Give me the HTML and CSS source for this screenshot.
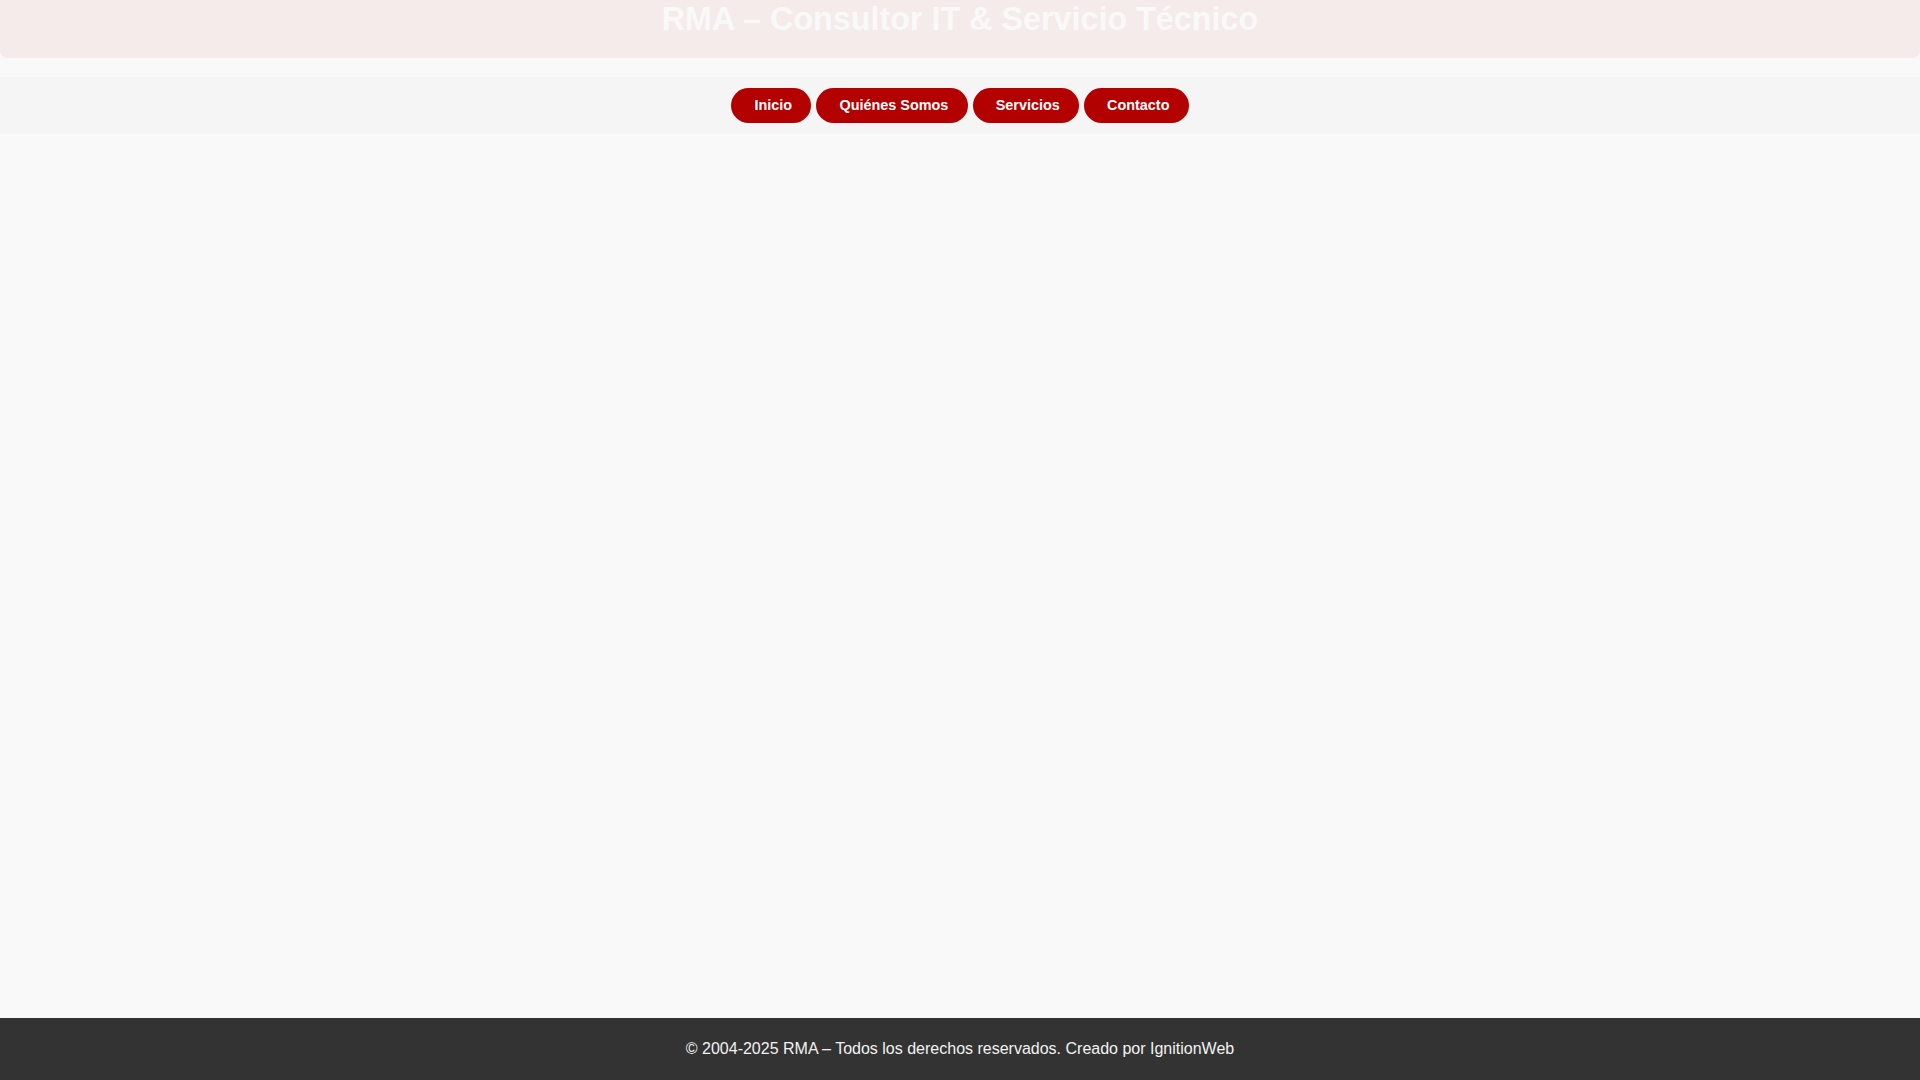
FILE: index.html
```html
<!DOCTYPE html>
<html lang="es">
<head>
<meta charset="utf-8">
<title>RMA – Consultor IT &amp; Servicio Técnico</title>
<link rel="stylesheet" href="styles.css">
</head>
<body>
<header class="site-header">
  <h1 class="site-title">RMA – Consultor IT &amp; Servicio Técnico</h1>
</header>
<nav class="site-nav">
  <a class="nav-btn" href="#"><i class="nav-ico"></i>Inicio</a>
  <a class="nav-btn" href="#"><i class="nav-ico"></i>Quiénes Somos</a>
  <a class="nav-btn" href="#"><i class="nav-ico"></i>Servicios</a>
  <a class="nav-btn" href="#"><i class="nav-ico"></i>Contacto</a>
</nav>
<main class="site-main"></main>
<footer class="site-footer">
  <p class="footer-text">© 2004-2025 RMA – Todos los derechos reservados. Creado por IgnitionWeb</p>
</footer>
</body>
</html>
```
FILE: styles.css
```css
html, body {
  margin: 0;
  padding: 0;
}
body {
  font-family: "Liberation Sans", Arial, sans-serif;
  background: #f9f9f9;
  min-height: 100vh;
  display: flex;
  flex-direction: column;
}
.site-header {
  background: #f5ebea;
  border-radius: 0 0 7px 7px;
  padding: 1px 0 20px;
  margin-bottom: 19.5px;
  text-align: center;
}
.site-title {
  margin: 0;
  font-size: 32.3px;
  font-weight: bold;
  line-height: 36.8px;
  color: #f9f9f9;
}
.site-nav {
  background: #f5f5f5;
  padding: 10.3px 0;
  display: flex;
  justify-content: center;
  gap: 5px;
}
.nav-btn {
  display: inline-block;
  background: #b30000;
  color: #ffffff;
  text-decoration: none;
  font-weight: bold;
  font-size: 14.4px;
  line-height: 16.5px;
  padding: 9.6px 19.2px;
  border-radius: 20px;
}
.nav-ico {
  display: inline-block;
  width: 4px;
}
.site-main {
  flex: 1;
}
.site-footer {
  background: #333333;
  padding: 22px 0;
  text-align: center;
}
.footer-text {
  margin: 0;
  color: #f2f2f2;
  font-size: 16px;
  line-height: 18.4px;
}
```
